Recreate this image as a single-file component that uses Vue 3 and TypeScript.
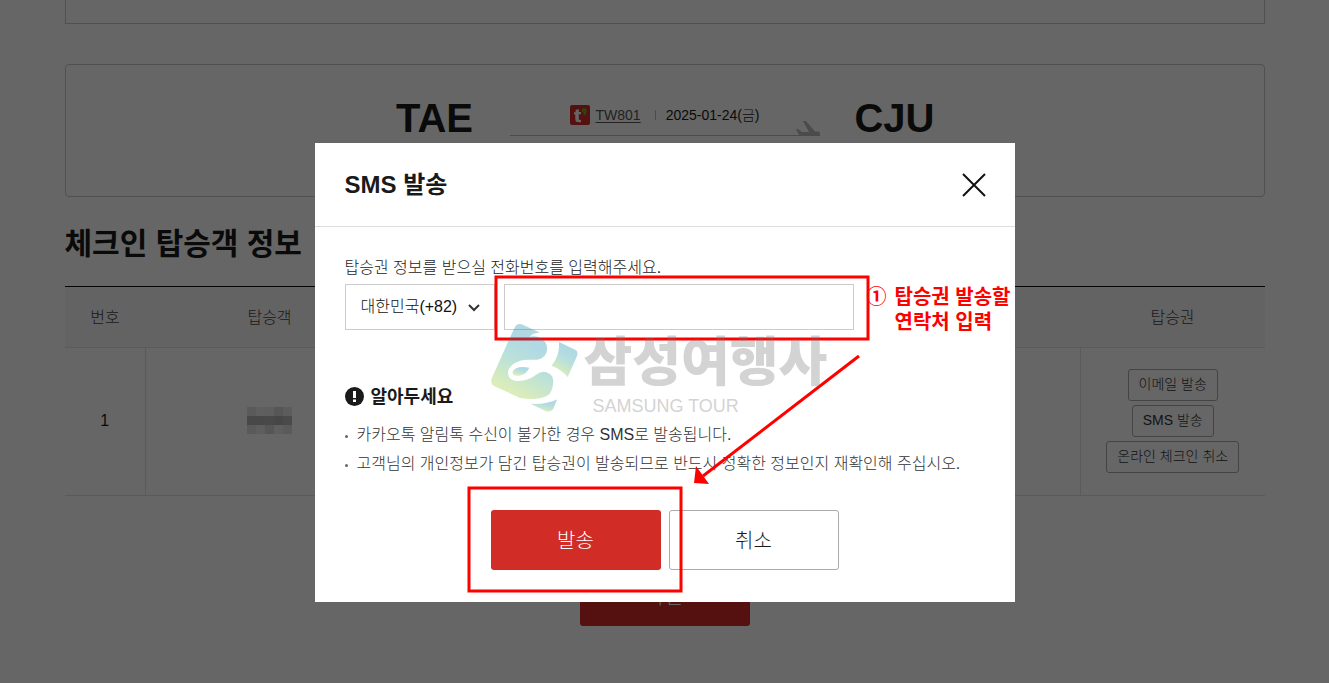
<script setup lang="ts">
import { ref } from 'vue'

const country = ref('82')
const phone = ref('')
const notices = [
  '카카오톡 알림톡 수신이 불가한 경우 SMS로 발송됩니다.',
  '고객님의 개인정보가 담긴 탑승권이 발송되므로 반드시 정확한 정보인지 재확인해 주십시오.',
]
const actions = ['이메일 발송', 'SMS 발송', '온라인 체크인 취소']
const maskShades = [226, 238, 235, 216, 230, 180, 180, 182, 176, 184, 226, 235, 216, 238, 224]
</script>

<template>
  <div class="page">
    <main class="content">
      <div class="previous-box"></div>

      <section class="journey">
        <strong class="airport">TAE</strong>
        <div class="route">
          <svg class="airline" viewBox="0 0 20 20" aria-hidden="true">
            <rect width="20" height="20" rx="2" fill="#d22c26" />
            <path d="M5.600 5l3.200-1v3h2.200v2.300H8.800V14q0 1.300 2.200.7v2.200Q5.300 18.300 5.300 14.200V9.500H4V7.200h1.600z" fill="#fff" />
            <path d="M11.800 5.500a2.500 2.500 0 1 1 5 0q0 4-3.800 5.800 1-1.500.9-3.300-2.100-.4-2.100-2.500z" fill="#78a22f" />
          </svg>
          <a href="#flight">TW801</a>
          <span class="divider"></span>
          <span>2025-01-24(금)</span>
          <svg class="plane" viewBox="0 0 24 15" aria-hidden="true">
            <path d="M0 8h2l4 3h7L7 0h3l9 10.500h3q2 0 2 2V15H5q-2-.5-3-3z" fill="#bbb" />
          </svg>
        </div>
        <strong class="airport">CJU</strong>
      </section>

      <h2>체크인 탑승객 정보</h2>
      <table>
        <colgroup>
          <col class="col-number" />
          <col class="col-name" />
          <col />
          <col class="col-pass" />
        </colgroup>
        <thead>
          <tr><th scope="col">번호</th><th scope="col">탑승객</th><td></td><th scope="col">탑승권</th></tr>
        </thead>
        <tbody>
          <tr>
            <td>1</td>
            <td>
              <div class="mask">
                <i v-for="(shade, i) in maskShades" :key="i" :style="{ background: `rgb(${shade}, ${shade}, ${shade})` }"></i>
              </div>
            </td>
            <td></td>
            <td>
              <div class="actions">
                <button v-for="action in actions" :key="action" type="button">{{ action }}</button>
              </div>
            </td>
          </tr>
        </tbody>
      </table>
      <button class="confirm" type="button">확인</button>
    </main>

    <div class="backdrop">
      <section class="dialog" role="dialog" aria-modal="true" aria-labelledby="dialog-title">
        <header>
          <h1 id="dialog-title">SMS 발송</h1>
          <button class="close" type="button" aria-label="닫기">
            <svg viewBox="0 0 24 24"><path d="M1 1l22 22M23 1L1 23" fill="none" stroke="#111" stroke-width="2" /></svg>
          </button>
        </header>
        <form class="body" @submit.prevent>
          <label for="phone">탑승권 정보를 받으실 전화번호를 입력해주세요.</label>
          <div class="fields">
            <div class="country">
              <select v-model="country" aria-label="국가번호">
                <option value="82">대한민국(+82)</option>
              </select>
              <svg viewBox="0 0 12 8" aria-hidden="true"><path d="M1 1l5 5 5-5" fill="none" stroke="#333" stroke-width="2" /></svg>
            </div>
            <input id="phone" v-model="phone" type="tel" />
          </div>
          <h3>
            <svg viewBox="0 0 19 19" aria-hidden="true">
              <circle cx="9.500" cy="9.500" r="9.500" fill="#1a1a1a" />
              <path d="M8 4h3v7H8zM8 12.500h3v2.500H8z" fill="#fff" />
            </svg>
            <span>알아두세요</span>
          </h3>
          <ul>
            <li v-for="notice in notices" :key="notice">{{ notice }}</li>
          </ul>
          <div class="buttons">
            <button class="send" type="submit">발송</button>
            <button class="cancel" type="button">취소</button>
          </div>
        </form>

        <svg class="marks" viewBox="0 0 700 459" aria-hidden="true">
          <g fill="none" stroke="#f00" stroke-width="3">
            <rect x="181" y="134" width="372" height="62" />
            <rect x="154" y="345" width="212" height="103" />
            <path d="M544 213L388 333" />
          </g>
          <path d="M379 340l2-17 13 18z" fill="#f00" />
        </svg>
        <p class="callout"><span class="step">①</span><span>탑승권 발송할<br />연락처 입력</span></p>

        <div class="watermark">
          <svg viewBox="30 36 268 276" aria-hidden="true">
            <defs>
              <linearGradient id="brand" x1="0.700" y1="0.100" x2="0.300" y2="1">
                <stop offset="0.200" stop-color="#0085a8" />
                <stop offset="0.500" stop-color="#20a080" />
                <stop offset="0.900" stop-color="#8fc41e" />
              </linearGradient>
            </defs>
            <g fill="url(#brand)">
              <path d="M125 42L180 67Q158 68 150 80Q168 76 183 84C200 95 204 108 201 124C196 142 180 150 162 149L143 149C112 150 85 166 84 188C85 205 98 213 115 213C138 213 152 206 168 195C182 186 192 183 200 187C216 192 222 204 220 219C218 240 213 250 203 257C185 268 155 270 120 264L42 228Q32 222 34 208L103 54Q110 38 125 42Z" />
              <path d="M238 96L288 120Q296 125 292 138L264 201Q245 178 215 167Q240 140 238 96Z" />
              <path d="M152 282Q195 285 232 269L220 298Q212 308 198 304Z" />
              <path d="M98 187C102 172 125 168 148 173C142 191 120 201 103 196Q98 194 98 187Z" />
            </g>
          </svg>
          <div class="brand"><b>삼성여행사</b><span>SAMSUNG TOUR</span></div>
        </div>
      </section>
    </div>
  </div>
</template>

<style>
body {
  background: #fff;
}
</style>

<style scoped>
* {
  box-sizing: border-box;
}

.page {
  min-height: 100vh;
  overflow: hidden;
  color: #1a1a1a;
  font: 300 16px/24px "Liberation Sans", "Noto Sans CJK KR", sans-serif;
}

button,
input,
select {
  font: inherit;
  color: inherit;
}

.content {
  max-width: 1200px;
  margin: 0 auto;
}

.previous-box {
  height: 24px;
  border: 1px solid #c8c8c8;
  border-top: 0;
}

.journey {
  display: grid;
  grid-template-columns: 150px 310px 150px;
  justify-content: center;
  height: 133px;
  margin-top: 40px;
  padding-top: 28px;
  border: 1px solid #c8c8c8;
  border-radius: 4px;
}

.airport {
  text-align: center;
  font-size: 40px;
  font-weight: 700;
  line-height: 50px;
}

.route {
  position: relative;
  display: flex;
  align-items: center;
  justify-content: center;
  height: 43px;
  padding-top: 2px;
  border-bottom: 1px solid #bbb;
  font-size: 14px;
}

.route a {
  margin-left: 6px;
  color: #555;
  text-underline-offset: 2px;
}

.airline {
  width: 20px;
  height: 20px;
}

.divider {
  width: 1px;
  height: 10px;
  margin: 0 10px 0 14px;
  background: #bbb;
}

.plane {
  position: absolute;
  right: 0;
  bottom: -1px;
  width: 24px;
  height: 15px;
}

h2 {
  margin: 25px 0 21px;
  font-size: 30px;
  line-height: 43px;
}

table {
  width: 100%;
  border-collapse: collapse;
  table-layout: fixed;
  border-top: 1px solid #111;
  text-align: center;
}

.col-number {
  width: 81px;
}

.col-name {
  width: 248px;
}

.col-pass {
  width: 184px;
}

thead {
  background: #f7f7f7;
  color: #444;
}

thead th,
thead td {
  height: 61px;
  padding: 2px 0 0;
  font-weight: 300;
  border-bottom: 1px solid #e0e0e0;
}

tbody td {
  height: 148px;
  padding: 0 0 2px;
  border-bottom: 1px solid #e0e0e0;
}

tbody td + td {
  border-left: 1px solid #e0e0e0;
}

.mask {
  display: grid;
  grid-template-columns: repeat(5, 9px);
  grid-auto-rows: 9px;
  justify-content: center;
}

.actions {
  display: flex;
  flex-direction: column;
  align-items: center;
  gap: 4px;
}

.actions button {
  height: 32px;
  padding: 0 10px 2px;
  border: 1px solid #aaa;
  border-radius: 3px;
  background: #fff;
  color: #333;
  font-size: 14px;
}

.confirm,
.buttons button {
  width: 170px;
  height: 60px;
  padding: 2px 0 0;
  border-radius: 3px;
  font-size: 20px;
}

.confirm {
  display: block;
  margin: 70px auto 0;
  border: 0;
  background: #d22c26;
  color: #fff;
}

.backdrop {
  position: fixed;
  inset: 0;
  display: flex;
  align-items: flex-start;
  justify-content: center;
  padding-top: 143px;
  background: rgba(0, 0, 0, 0.6);
}

.dialog {
  position: relative;
  width: 700px;
  background: #fff;
}

header {
  display: flex;
  align-items: center;
  justify-content: space-between;
  height: 84px;
  padding: 0 29px 0 30px;
  border-bottom: 1px solid #ddd;
}

h1 {
  margin: 0;
  font-size: 24px;
  line-height: 36px;
}

.close {
  width: 24px;
  height: 24px;
  padding: 0;
  border: 0;
  background: none;
}

.close svg {
  display: block;
}

.body {
  padding: 29px 30px 32px;
}

label {
  display: block;
  color: #222;
}

.fields {
  display: flex;
  gap: 9px;
  margin-top: 4px;
}

.country {
  position: relative;
  width: 150px;
}

.country select {
  width: 100%;
  height: 46px;
  padding: 0 0 0 15px;
  border: 1px solid #ccc;
  border-radius: 0;
  background: #fff;
  color: #111;
  appearance: none;
}

.country svg {
  position: absolute;
  top: 20px;
  right: 15px;
  width: 12px;
  height: 8px;
}

.fields input {
  width: 350px;
  height: 46px;
  padding: 0 15px;
  border: 1px solid #ccc;
  background: #fff;
}

h3 {
  display: flex;
  align-items: center;
  gap: 7px;
  margin: 52px 0 0;
  font-size: 18px;
  line-height: 26px;
}

h3 svg {
  width: 19px;
  height: 19px;
}

h3 span {
  padding-top: 2px;
}

ul {
  margin: 10px 0 0;
  padding: 0;
  list-style: none;
  color: #333;
  line-height: 29px;
}

li {
  position: relative;
  padding-left: 12px;
}

li::before {
  content: "";
  position: absolute;
  left: 0;
  top: 15px;
  width: 3px;
  height: 3px;
  border-radius: 50%;
  background: #666;
}

.buttons {
  display: flex;
  justify-content: center;
  gap: 8px;
  margin-top: 32px;
}

.buttons .send {
  border: 0;
  background: #d22c26;
  color: #fff;
}

.buttons .cancel {
  border: 1px solid #aaa;
  background: #fff;
}

.marks {
  position: absolute;
  inset: 0;
  width: 100%;
  pointer-events: none;
}

.callout {
  position: absolute;
  top: 142px;
  left: 552px;
  display: flex;
  gap: 8px;
  margin: 0;
  color: #f00;
  font-size: 20px;
  font-weight: 700;
  line-height: 25px;
  white-space: nowrap;
}

.watermark {
  position: absolute;
  top: 179px;
  left: 175px;
  display: flex;
  gap: 5px;
  opacity: 0.3;
  pointer-events: none;
}

.watermark svg {
  width: 89px;
  height: 92px;
}

.brand {
  display: flex;
  flex-direction: column;
  padding-top: 4px;
  color: #707070;
}

.brand b {
  font-size: 53px;
  font-weight: 900;
  line-height: 74px;
}

.brand span {
  margin-top: -4px;
  padding-left: 9px;
  font-size: 18px;
  font-weight: 400;
  line-height: 20px;
}
</style>
